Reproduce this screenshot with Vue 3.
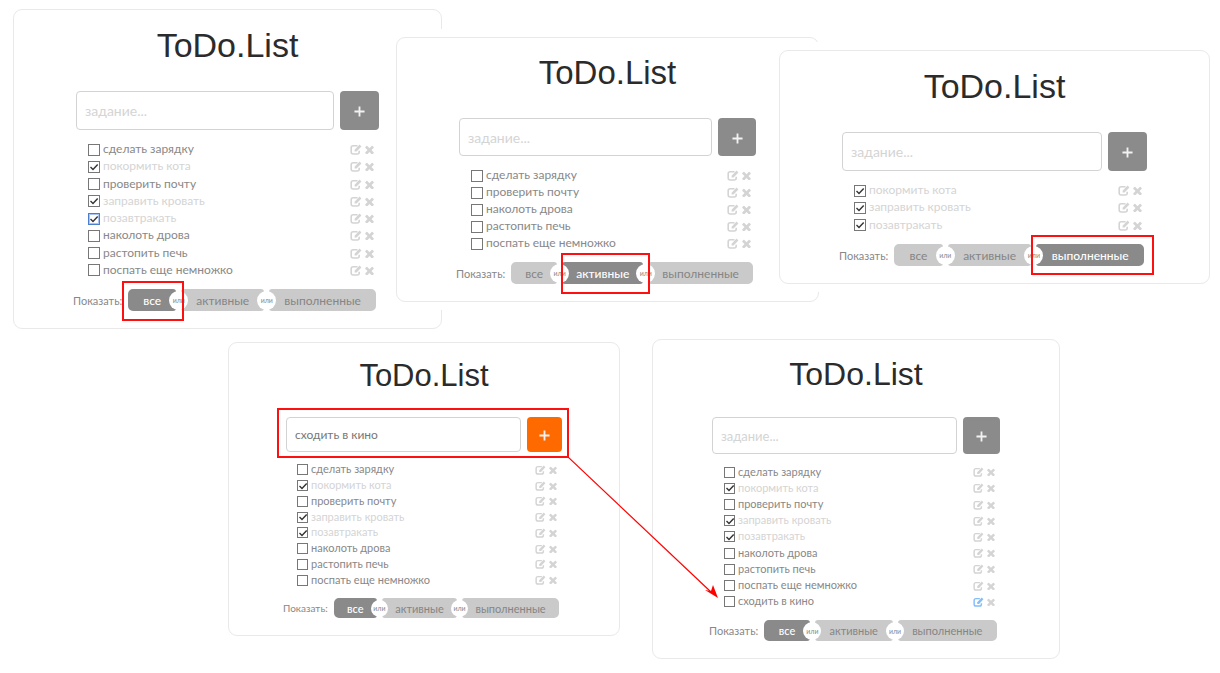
<script setup>
import { ref } from 'vue'

const all = [
  ['сделать зарядку', false],
  ['покормить кота', true],
  ['проверить почту', false],
  ['заправить кровать', true],
  ['позавтракать', true],
  ['наколоть дрова', false],
  ['растопить печь', false],
  ['поспать еще немножко', false],
].map(([text, done]) => ({ text, done }))

const copy = (list) => list.map((t) => ({ ...t }))
const filters = ['все', 'активные', 'выполненные']

const boards = ref([
  { id: 'all', filter: 'все', draft: '', focused: 4, tasks: copy(all) },
  { id: 'active', filter: 'активные', draft: '', tasks: copy(all.filter((t) => !t.done)) },
  { id: 'done', filter: 'выполненные', draft: '', tasks: copy(all.filter((t) => t.done)) },
  { id: 'typing', filter: 'все', draft: 'сходить в кино', tasks: copy(all) },
  {
    id: 'added',
    filter: 'все',
    draft: '',
    edited: 8,
    tasks: [...copy(all), { text: 'сходить в кино', done: false }],
  },
])
</script>

<template>
  <main class="canvas">
    <section v-for="b in boards" :key="b.id" class="board" :class="b.id">
      <h1>ToDo.List</h1>
      <form class="entry" @submit.prevent>
        <input v-model="b.draft" type="text" placeholder="задание..." aria-label="задание" />
        <button type="submit" class="add" aria-label="добавить">
          <svg viewBox="0 0 12 12"><path d="M6 0.5v11M0.5 6h11" /></svg>
        </button>
      </form>
      <ul class="tasks">
        <li v-for="(t, i) in b.tasks" :key="i" :class="{ finished: t.done }">
          <span class="box" :class="{ focused: b.focused === i }">
            <input :id="`${b.id}-${i}`" v-model="t.done" type="checkbox" />
            <svg v-if="t.done" viewBox="0 0 10 10"><path d="M1.5 5L4 7.5L8.7 2.5" /></svg>
          </span>
          <label :for="`${b.id}-${i}`">{{ t.text }}</label>
          <button type="button" class="tool" :class="{ hot: b.edited === i }" aria-label="изменить">
            <svg class="edit" viewBox="0 0 12 11">
              <path class="frame" d="M7.5 1.8H3.2Q1.2 1.8 1.2 3.8V8Q1.2 10 3.2 10H7.2Q9.2 10 9.2 8V6.8" />
              <path class="pen" d="M9.6 0.6L11.4 2.4L6.6 7.6H4.6V5.7Z" />
            </svg>
          </button>
          <button type="button" class="tool" aria-label="удалить">
            <svg class="cross" viewBox="300 256 1190 1240"><path d="M1490 1322q0 40-28 68l-136 136q-28 28-68 28t-68-28l-294-294-294 294q-28 28-68 28t-68-28l-136-136q-28-28-28-68t28-68l294-294-294-294q-28-28-28-68t28-68l136-136q28-28 68-28t68 28l294 294 294-294q28-28 68-28t68 28l136 136q28 28 28 68t-28 68l-294 294 294 294q28 28 28 68z" /></svg>
          </button>
        </li>
      </ul>
      <div class="show">
        <span class="caption">Показать:</span>
        <div class="bar">
          <template v-for="(f, i) in filters" :key="f">
            <span v-if="i" class="or"><span>или</span></span>
            <button type="button" :class="{ on: b.filter === f }" @click="b.filter = f">{{ f }}</button>
          </template>
        </div>
      </div>
    </section>

    <div class="mark mark-all"></div>
    <div class="mark mark-active"></div>
    <div class="mark mark-done"></div>
    <div class="mark mark-entry"></div>
    <svg class="arrow" viewBox="0 0 150 142">
      <path class="shaft" d="M0 0L143 135" />
      <path class="head" d="M150 141L137 133L143 134L145 128Z" />
    </svg>
  </main>
</template>

<style>
body {
  background: #fff;
}
</style>

<style scoped>
.canvas {
  position: relative;
  min-height: 673px;
  font-family: Lato, 'Noto Sans', sans-serif;
}

/* Boards pinned on the canvas */
.board {
  --side: 62px;
  --field: 39px;
  --text: 12px;
  --small: 11px;
  --entry: 14px;
  --title: 34px;
  --top: 16px;
  --head: 27px;
  --gap: 11px;
  --bar: 22px;
  --box: 12px;
  --pad: 14px;
  --dot: 19px;
  position: absolute;
  box-sizing: border-box;
  padding: var(--top) var(--side) 17px;
  background: #fff;
  border: 1px solid #e9e9e9;
  border-radius: 9px;
  box-shadow: 0 0 0 8px #fff;
}
.all { left: 13px; top: 9px; width: 429px; --list: 138px; }
.active { left: 396px; top: 37px; width: 423px; --list: 85px; --field: 38px; --head: 26px; --title: 33px; }
.done { left: 779px; top: 50px; width: 431px; --list: 52px; }
.typing {
  left: 228px; top: 342px; width: 392px;
  --side: 57px; --list: 126px; --field: 35px; --text: 11px; --small: 10px; --entry: 12px; --title: 31px;
  --top: 14px; --head: 22px; --gap: 10px; --bar: 20px; --box: 11px; --pad: 12px; --dot: 17px;
}
.added {
  left: 652px; top: 339px; width: 408px;
  --side: 59px; --list: 146px; --field: 37px; --text: 11px; --entry: 13px; --title: 32px;
  --top: 15px; --head: 24px; --gap: 10px; --bar: 21px; --box: 11px; --pad: 13px; --dot: 18px;
}

h1 {
  margin: 0 0 var(--head);
  font: 400 var(--title)/38px 'Liberation Sans', Arial, sans-serif;
  color: #2b2b2b;
  text-align: center;
}

button {
  border: 0;
  padding: 0;
  background: none;
  font: inherit;
}

.entry {
  display: flex;
  gap: 6px;
  height: var(--field);
}
.entry input {
  flex: 1;
  min-width: 0;
  box-sizing: border-box;
  padding: 0 8px;
  border: 1px solid #d3d3d3;
  border-radius: 4px;
  font-family: inherit;
  font-size: var(--entry);
  color: #777;
  background: #fff;
}
.entry input::placeholder { color: #d4d4d4; opacity: 1; }
.add {
  display: flex;
  align-items: center;
  justify-content: center;
  width: var(--field);
  border-radius: 4px;
  background: #8b8b8b;
}
.add svg { width: 11px; height: 11px; margin-top: 2px; }
.add path { stroke: #f2f2f2; stroke-width: 2; fill: none; }
.typing .add { background: #ff6a00; }

.tasks {
  display: grid;
  grid-auto-rows: 1fr;
  min-height: var(--list);
  margin: var(--gap) 0 0;
  padding: 0 5px 0 12px;
  list-style: none;
}
.tasks li {
  display: flex;
  align-items: center;
  font-size: var(--text);
  line-height: 13px;
  color: #888;
}
.tasks li.finished { color: #d4d4d4; }
.tasks label {
  flex: 1;
  padding: 0 0 2px 3px;
}
.box {
  display: grid;
  width: var(--box);
  height: var(--box);
}
.box input,
.box svg { grid-area: 1 / 1; }
.box input {
  appearance: none;
  box-sizing: border-box;
  width: 100%;
  height: 100%;
  margin: 0;
  border: 1px solid #777;
  background: #fff;
}
.box.focused input { border-color: #4a7fd0; box-shadow: inset 0 0 0 1px #a9c6f2; }
.box svg {
  width: 10px;
  height: 10px;
  place-self: center;
  pointer-events: none;
}
.box path { fill: none; stroke: #333; stroke-width: 1.4; }

.typing .tasks { padding-left: 11px; }
.tool { display: flex; color: #d4d4d4; }
.tool + .tool { margin-left: 3px; }
.edit { width: 12px; height: 11px; }
.cross { width: 9px; height: 9px; }
.typing .edit,
.added .edit { width: 11px; height: 10px; }
.typing .cross,
.added .cross { width: 8px; height: 8px; }
.frame { fill: none; stroke: currentColor; stroke-width: 1.6; }
.pen, .cross path { fill: currentColor; }
.tool.hot { color: #84bdfb; }

.show {
  display: flex;
  align-items: center;
  justify-content: space-between;
  gap: 6px;
  margin: 10px 3px 0 -3px;
}
.caption { font-size: var(--small); color: #888; }
.bar {
  flex: 1;
  display: flex;
  height: var(--bar);
}
.bar button {
  flex: 1 1 auto;
  padding: 0 var(--pad);
  border-radius: 3px;
  background: #cacaca;
  font-size: var(--text);
  color: #858585;
  text-align: center;
}
.bar button:first-child { border-radius: 5px 3px 3px 5px; }
.bar button:last-child { border-radius: 3px 5px 5px 3px; }
.bar button.on { background: #8a8a8a; color: #fff; font-weight: 500; }
.or {
  display: flex;
  align-items: center;
  justify-content: center;
  width: 5px;
}
.or span {
  position: relative;
  z-index: 1;
  flex: none;
  width: var(--dot);
  height: var(--dot);
  border-radius: 50%;
  background: #fff;
  font-size: 7px;
  line-height: var(--dot);
  text-align: center;
  color: #888;
}

/* Red annotations laid over the boards */
.mark {
  position: absolute;
  z-index: 2;
  box-sizing: border-box;
  border: 2px solid #ff1010;
  pointer-events: none;
}
.mark-all { left: 122px; top: 281px; width: 62px; height: 40px; }
.mark-active { left: 561px; top: 253px; width: 89px; height: 41px; }
.mark-done { left: 1031px; top: 235px; width: 123px; height: 40px; }
.mark-entry { left: 277px; top: 408px; width: 292px; height: 50px; }
.arrow {
  position: absolute;
  z-index: 2;
  left: 568px;
  top: 457px;
  width: 150px;
  height: 142px;
  pointer-events: none;
}
.shaft { stroke: #f00; stroke-width: 1.2; fill: none; }
.head { fill: #f00; }
</style>
